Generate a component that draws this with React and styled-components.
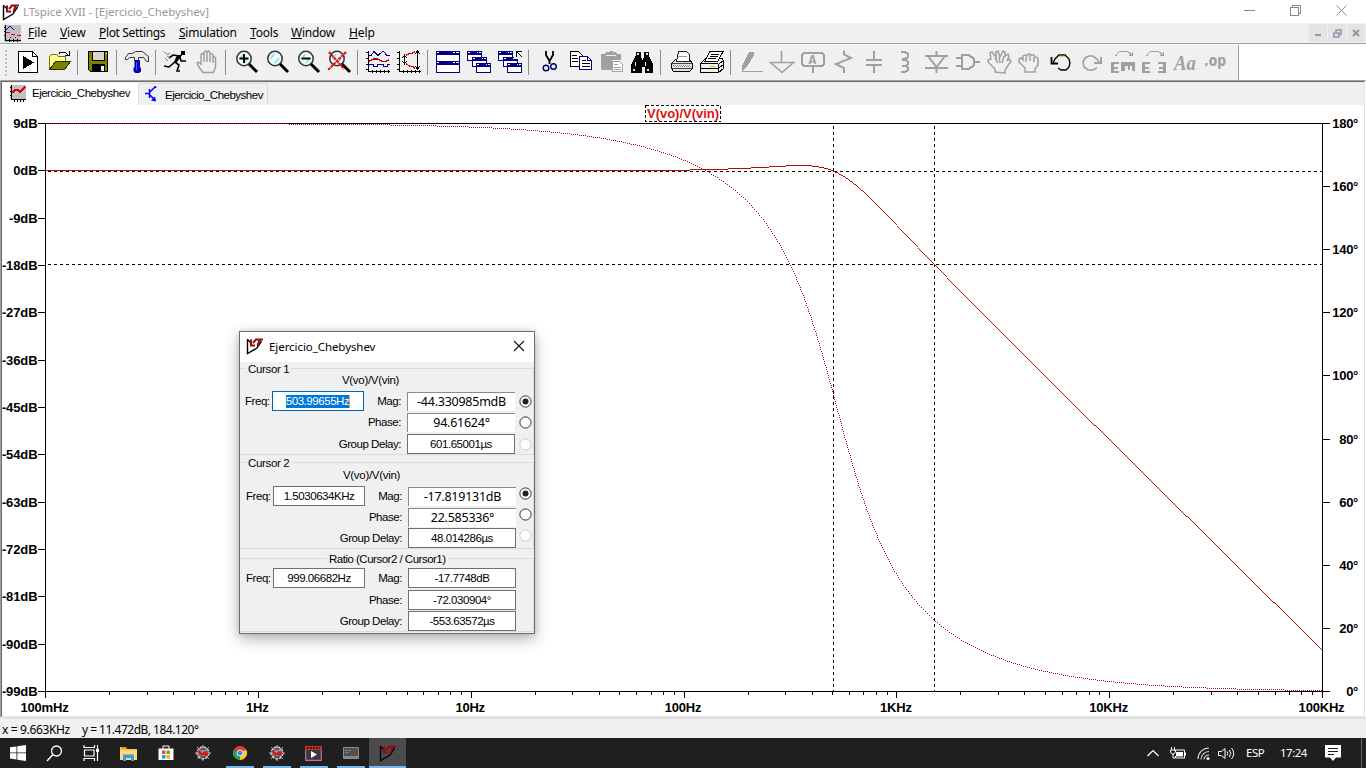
import React from "react";
import styled, { createGlobalStyle, css } from "styled-components";

const GlobalStyle = createGlobalStyle`
  * { box-sizing: border-box; }
  html, body { margin: 0; padding: 0; overflow: hidden; background: #fff; }
  body { font-family: "Noto Sans", "Open Sans", sans-serif; font-size: 11.5px; color: #000; }
  svg { display: block; flex: none; }
`;

const GRAY = "#a0a0a0";

const Window = styled.div`
  width: 1366px;
  height: 768px;
  display: flex;
  flex-direction: column;
  background: #fff;
  position: relative;
`;

/* ---------- title bar ---------- */
const TitleBar = styled.header`
  height: 23px;
  display: flex;
  align-items: center;
  padding: 0 2px;
  background: #fff;
`;
const TitleText = styled.span`
  flex: 1;
  margin-left: 3px;
  color: #999;
  letter-spacing: -0.07px;
  line-height: 22px;
  white-space: pre;
`;
const WindowButton = styled.span`
  width: 46px;
  height: 23px;
  display: flex;
  align-items: flex-start;
  justify-content: center;
  padding-top: 5px;
`;

/* ---------- menu bar ---------- */
const MenuBar = styled.nav`
  height: 20px;
  display: flex;
  align-items: center;
  padding-left: 4px;
  background: #f0f0f0;
`;
const MenuItem = styled.span`
  width: ${(p) => p.$w}px;
  margin-right: 14px;
  font-size: 12px;
  letter-spacing: ${(p) => p.$ls || 0}px;
  line-height: 20px;
  white-space: nowrap;
`;
const MenuIcon = styled.span`
  margin-right: 7px;
`;
const MdiButton = styled.span`
  width: 18px;
  height: 18px;
  margin-right: 1px;
  background: #e4e4e4;
  display: flex;
  align-items: center;
  justify-content: center;
`;
const Spacer = styled.span`
  flex: 1;
`;

/* ---------- tool bar ---------- */
const ToolRow = styled.div`
  height: 37px;
  border-top: 1px solid ${GRAY};
  background: #fff;
  display: flex;
`;
const ToolBar = styled.div`
  width: 1239px;
  margin-top: 1px;
  background: #f0f0f0;
  border-right: 1px solid ${GRAY};
  display: flex;
  align-items: flex-start;
  padding-top: 5px;
`;
const Grip = styled.span`
  width: 2px;
  height: 27px;
  margin: 0 5px 0 5px;
  background: repeating-linear-gradient(#bdbdbd 0 2px, #f0f0f0 2px 4px);
`;
const Divider = styled.span`
  width: 8px;
  height: 25px;
  border-left: 3px solid #f0f0f0;
  &::after {
    content: "";
    display: block;
    width: 1px;
    height: 25px;
    background: #8c8c8c;
  }
`;

/* ---------- tabs ---------- */
const Workspace = styled.main`
  height: 637px;
  display: flex;
  flex-direction: column;
  border-top: 1px solid ${GRAY};
  border-left: 1px solid ${GRAY};
  border-right: 1px solid #fff;
`;
const WorkspaceInner = styled.div`
  flex: 1;
  display: flex;
  flex-direction: column;
  border-top: 1px solid #696969;
  border-left: 1px solid #696969;
  border-right: 1px solid #e3e3e3;
  border-bottom: 1px solid #e3e3e3;
`;
const TabStrip = styled.div`
  height: 23px;
  display: flex;
  align-items: flex-end;
  background: #f0f0f0;
`;
const Tab = styled.div`
  display: flex;
  align-items: center;
  width: ${(p) => p.$w}px;
  height: ${(p) => (p.$active ? 22 : 21)}px;
  margin-bottom: ${(p) => (p.$active ? 0 : 1)}px;
  padding-left: ${(p) => (p.$active ? 8 : 6)}px;
  padding-bottom: ${(p) => (p.$active ? 3 : 0)}px;
  background: ${(p) => (p.$active ? "#fff" : "#f0f0f0")};
  border-right: 1px solid #d9d9d9;
  border-top: 1px solid ${(p) => (p.$active ? "#fff" : "#d9d9d9")};
  font: 11.5px "Liberation Sans", sans-serif;
  letter-spacing: -0.5px;
`;
const TabText = styled.span`
  margin-left: ${(p) => p.$ml || 6}px;
  padding-top: ${(p) => p.$pt || 0}px;
`;

/* ---------- status and task bars ---------- */
const StatusBar = styled.footer`
  height: 21px;
  border-top: 2px solid #e3e3e3;
  background: #f0f0f0;
  display: flex;
  align-items: center;
  gap: 12px;
  padding-left: 2px;
  padding-top: 2px;
  font-size: 12px;
  white-space: pre;
`;
const StatusItem = styled.span`
  letter-spacing: ${(p) => p.$ls}px;
`;
const TaskBar = styled.div`
  height: 30px;
  background: #1f1f1f;
  display: flex;
  color: #fff;
`;
const TaskCell = styled.span`
  width: ${(p) => p.$w || 37}px;
  height: 30px;
  display: flex;
  align-items: center;
  justify-content: center;
  position: relative;
  background: ${(p) => (p.$active ? "#4b4b4b" : "transparent")};
  ${(p) =>
    p.$open &&
    css`
      &::after {
        content: "";
        position: absolute;
        bottom: 0;
        left: ${p.$active ? 0 : 5}px;
        right: ${p.$active ? 0 : 4}px;
        height: 2px;
        background: #76b9ed;
      }
    `}
`;
const TrayText = styled.span`
  width: ${(p) => p.$w}px;
  font-size: 11.5px;
  line-height: 30px;
  letter-spacing: -0.5px;
`;
const TrayIcon = styled.span`
  width: ${(p) => p.$w}px;
  display: flex;
  align-items: center;
`;
const PeekEdge = styled.span`
  width: 5px;
  border-left: 1px solid #666;
`;

/* ---------- cursor dialog ---------- */
const Dialog = styled.section`
  position: absolute;
  left: 239px;
  top: 331px;
  width: 296px;
  height: 303px;
  border: 1px solid #6e6e6e;
  background: #f0f0f0;
  box-shadow: 0 5px 14px rgba(0, 0, 0, 0.3), 0 0 5px rgba(0, 0, 0, 0.12);
  font: 11.5px "Liberation Sans", sans-serif;
  letter-spacing: -0.45px;
`;
const DialogTitle = styled.div`
  height: 30px;
  background: #fff;
  display: flex;
  align-items: center;
  padding: 0 9px 2px 6px;
  font-family: "Noto Sans", sans-serif;
  letter-spacing: -0.07px;
  span { flex: 1; margin-left: 5px; }
`;
const Group = styled.div`
  position: relative;
  height: ${(p) => p.$h}px;
  margin-top: ${(p) => p.$mt}px;
  padding-top: ${(p) => p.$pt}px;
  padding-left: ${(p) => p.$indent}px;
  border: 1px solid #dcdcdc;
  border-left-width: 0;
`;
const Legend = styled.span`
  position: absolute;
  top: -7px;
  left: ${(p) => p.$left}px;
  padding: 0 2px;
  background: #f0f0f0;
  line-height: 15px;
  white-space: pre;
  letter-spacing: ${(p) => p.$ls || -0.35}px;
`;
const TraceName = styled.div`
  height: 17px;
  width: 251px;
  text-align: center;
  line-height: 13px;
  letter-spacing: -0.3px;
`;
const Row = styled.div`
  display: flex;
  align-items: center;
  height: 20px;
  margin-bottom: ${(p) => p.$gap}px;
`;
const FreqLabel = styled.span`
  width: 27px;
`;
const Label = styled.span`
  flex: 1;
  text-align: right;
  padding-right: 6px;
  letter-spacing: -0.45px;
`;
const Field = styled.span`
  width: ${(p) => p.$w}px;
  height: 20px;
  background: #fff;
  border: 1px solid ${(p) => (p.$focus ? "#0067b8" : "#6f6f6f")};
  display: flex;
  align-items: center;
  justify-content: center;
`;
const Readout = styled.span`
  width: 108px;
  height: 19px;
  background: #fff;
  border-top: 1px solid #8a8a8a;
  border-left: 1px solid #8a8a8a;
  display: flex;
  align-items: center;
  justify-content: center;
  font: 12.5px "Noto Sans", sans-serif;
  letter-spacing: -0.25px;
`;
const Selected = styled.span`
  background: #0078d7;
  color: #fff;
  line-height: 13px;
  border-right: 1px solid #f0a050;
`;
const RadioSlot = styled.span`
  width: ${(p) => p.$w}px;
  padding-left: ${(p) => p.$pl}px;
  padding-top: ${(p) => p.$pt}px;
  height: 20px;
`;

/* ---------- glyphs ---------- */
const Logo = ({ size = 18 }) => (
  <svg width={size} height={size} viewBox="0 0 18 18">
    <path d="M1.500 2V16.500L11 11L15.500 4" fill="none" stroke="#000" strokeWidth="1.400" />
    <path d="M1.500 2.500L5 6" stroke="#000" strokeWidth="1.200" />
    <path d="M5 2.500v6h4M7 6l3-3.500h7M13.500 2.500L11.500 9" fill="none" stroke="#8c0c10" strokeWidth="2" />
  </svg>
);

const MiniPlot = () => (
  <svg width="17" height="17" viewBox="0 0 17 17" shapeRendering="crispEdges">
    <path d="M0 0h17v17H0z" fill="#c0c0c0" />
    <path d="M1.500 0v15.500H17M0 2.500h2M0 6.500h2M0 10.500h2M5.500 14v3M9.500 14v3M13.500 14v3" stroke="#000" fill="none" />
    <path d="M2 5l4-4 4 4" stroke="#0000c0" fill="none" />
    <path d="M2 7.500h4M7 9.500h4M13 10.500h4" stroke="#e00000" />
    <path d="M6 12.500h1M11 12.500h1" stroke="#0000c0" />
  </svg>
);

const PlotTabIcon = () => (
  <svg width="16" height="17" viewBox="0 0 16 17" shapeRendering="crispEdges">
    <path d="M0 0h16v14H0z" fill="#c0c0c0" />
    <path d="M1.500 0v14.500H16M0 2.500h2M0 6.500h2M0 10.500h2M4.500 14v3M7.500 14v3M10.500 14v3M13.500 14v3" stroke="#000" fill="none" />
    <path d="M2 8l3-3h3l2 2 5-5" stroke="#e00000" strokeWidth="1.500" fill="none" />
  </svg>
);

const TransistorIcon = () => (
  <svg width="13" height="16" viewBox="0 0 13 16">
    <path d="M0 7.500h4.500M4.500 3v9M5 6l5-5M5 9l5 5M10.500 0v2" stroke="#0000ff" fill="none" strokeWidth="1.500" />
    <path d="M11 15.500l-5-1 4-4z" fill="#0000ff" />
  </svg>
);

const Lens = ({ children }) => (
  <>
    <circle cx="14" cy="8.500" r="7.200" fill="#f4fbfb" stroke="#333" strokeWidth="1.500" />
    <path d="M9.500 9l4-5M14 13l4-5" stroke="#70e8e8" strokeWidth="1.500" />
    <path d="M19 14l8 8" stroke="#000" strokeWidth="3" />
    {children}
  </>
);

const MiniWin = ({ x, y }) => (
  <g transform={`translate(${x} ${y})`}>
    <path d="M.5 .5h14v9H.5z" fill="#fff" stroke="#000080" />
    <path d="M0 0h15v4H0z" fill="#000080" />
    <path d="M1 1.500h2M10 1.500h1M12 1.500h2" stroke="#fff" />
  </g>
);

const FrameArc = () => <path d="M8.500 6l4-4.500h8l5 4M25.500 1.500v4h-4" stroke={GRAY} fill="none" />;

const ICONS = {
  run: (
    <>
      <path d="M6.500 1.500h14l5 5v16h-19z" fill="#fff" stroke="#000" />
      <path d="M20.500 1.500v5h5" fill="none" stroke="#000" />
      <path d="M11 6v13l11-6.500z" />
    </>
  ),
  open: (
    <>
      <path d="M6.500 19.500V6.500l2-2h5l2 2h7v5" fill="#ffff90" stroke="#707000" />
      <path d="M6.500 19.500l6-8h15l-6 8z" fill="#808000" stroke="#303000" />
      <path d="M16 3.500l2-1.500h4l3 3M26.500 1v4.500H22" fill="none" stroke="#000" />
    </>
  ),
  save: (
    <>
      <path d="M6.500 1.500h19v20h-17l-2-2z" fill="#808000" stroke="#000" />
      <path d="M10.500 1.500h12v9h-12z" fill="#d8d8d0" stroke="#000" />
      <path d="M10 14h13v8H10z" />
      <path d="M19 16h3v5h-3z" fill="#f0f0f0" />
      <path d="M23.500 3h1" stroke="#fff" />
    </>
  ),
  hammer: (
    <>
      <path d="M4.500 7.500l3-4h4l3-2h7l6 5v5h-2l-3-4h-5v3h-4v-3h-5l-2 2h-2z" fill="#e8e8e8" stroke="#333" />
      <path d="M14 10.500h4.500v6l1 2v3l-1.500 1h-3.500l-1.500-1v-3l1-2z" fill="#0000e0" stroke="#000070" />
      <path d="M15.500 12v8" stroke="#5050ff" />
    </>
  ),
  runner: (
    <>
      <path d="M21 1h4v4h-4z" />
      <path d="M21 5l-6 7 4 3-2 6h3M16 11L9 17l-5-1M20 6l-7-1-4 3M20 7l1 4h5" fill="none" stroke="#000" strokeWidth="1.600" />
      <path d="M17 5h5l-5 7h-3z" />
      <path d="M4 1.500l3 3 3-1M7 6l3 2M5 8l3 3" fill="none" stroke="#777" />
    </>
  ),
  hand: (
    <path d="M12 22.500l-3-4-3-5 1-1.500 3 2V4.500l1-1 2 1V2.500l1.500-1.500 1.500 1.500V2l1.500-1L19 3v1l1.500-.5L22 5v2l1-.5 1.500 1.500v9l-2 5.500zM13 5v7M16 3v9M19 4v8M22 7v6" fill="#f0f0f0" stroke={GRAY} strokeWidth="1.500" />
  ),
  zoomIn: <Lens><path d="M9.500 8.500h9M14 4v9" stroke="#000" strokeWidth="2" /></Lens>,
  zoom: <Lens />,
  zoomOut: <Lens><path d="M9.500 8.500h9" stroke="#000" strokeWidth="2" /></Lens>,
  zoomFit: (
    <Lens>
      <path d="M6 2l15 17M23 2L5 20" stroke="#e01818" strokeWidth="2.200" strokeDasharray="3 .7" />
    </Lens>
  ),
  plot: (
    <>
      <path d="M6.500 1v20.500H28M4 2.500h3M4 8.500h3M4 14.500h3M4 19.500h3M10.500 20v3M14.500 20v3M18.500 20v3M22.500 20v3M26.500 20v3" stroke="#000" fill="none" />
      <path d="M7 5.500h2l3-4 4 4 5-4.500 4 4.500h3" stroke="#0000a0" fill="none" />
      <path d="M7 11.500l4-2.500h5l4 2.500h4l3-2" stroke="#c00000" fill="none" strokeWidth="1.300" />
      <path d="M7 14.500h4v2h4v-2h6v2h4v-2h3" stroke="#0000a0" fill="none" />
    </>
  ),
  autorange: (
    <>
      <path d="M6.500 1v20.500H28M4 2.500h3M4 8.500h3M4 14.500h3M4 19.500h3M10.500 20v3M14.500 20v3M18.500 20v3M22.500 20v3M26.500 20v3M11.500 5v9M9.500 8l2-3 2 3M9.500 11l2 3 2-3M24.500 1v18M22 4l2.500-3L27 4M22 16l2.500 3 2.500-3" stroke="#000" fill="none" />
      <path d="M13 5.500l3-2h3l3-2M13 13.500l4 3h3l2 2" stroke="#e00000" strokeWidth="1.400" fill="none" />
    </>
  ),
  tile: (
    <>
      <path d="M4.500 1.500h23v21h-23z" fill="#fff" stroke="#000080" />
      <path d="M4 1h24v4H4zM4 11h24v4H4z" fill="#000080" />
      <path d="M5 2.500h2M21 2.500h2M24 2.500h3M5 12.500h2M21 12.500h2M24 12.500h3" stroke="#fff" />
    </>
  ),
  cascade: (
    <>
      <MiniWin x={4} y={1} />
      <MiniWin x={9} y={7} />
      <MiniWin x={13} y={13} />
    </>
  ),
  closeAll: (
    <>
      <MiniWin x={4} y={1} />
      <MiniWin x={9} y={7} />
      <MiniWin x={13} y={13} />
      <path d="M20 0h9v9h-9z" fill="#f0f0f0" />
      <path d="M22.500 7V1.500H28M23 2l5 5" stroke="#000" fill="none" strokeWidth="1.200" />
    </>
  ),
  cut: (
    <>
      <path d="M13 1v4l3.500 6M20 1v4l-3.500 6v3" stroke="#000" fill="none" strokeWidth="1.800" />
      <circle cx="13" cy="18" r="2.800" fill="none" stroke="#00006c" strokeWidth="1.400" />
      <circle cx="20.500" cy="16.500" r="2.800" fill="none" stroke="#00006c" strokeWidth="1.400" />
    </>
  ),
  copy: (
    <>
      <path d="M6.500 1.500h8l4 4v11h-12z" fill="#fff" stroke="#000" />
      <path d="M8 5.500h5M8 8.500h6M8 11.500h6" stroke="#000" />
      <path d="M15.500 6.500h8l4 4v9h-12z" fill="#fff" stroke="#000080" />
      <path d="M23.500 6.500v4h4" fill="none" stroke="#000080" />
      <path d="M18 10.500h4M18 13.500h8M18 16.500h8" stroke="#000" />
    </>
  ),
  paste: (
    <>
      <path d="M6 4h4l1-2h3l1-1h2l1 1h3l1 2h4v6h-9v10H7l-1-1z" fill={GRAY} />
      <path d="M11 5.500h10" stroke="#f0f0f0" />
      <path d="M17.500 11.500h7l3 3v7h-10zM19 14.500h4M19 17.500h7M19 19.500h7" fill="#fff" stroke={GRAY} />
    </>
  ),
  find: (
    <>
      <path d="M10 2h5v5l1 3h1l1-3V2h5v4l4 9v8h-8v-6h-3v6H5v-8l5-9z" transform="translate(0 -.5)" />
      <path d="M11 4h2M20 4h2M9.500 12v4M19.500 12v4M8 19v2M22 19v2" stroke="#e8e8e8" strokeWidth="1.300" />
    </>
  ),
  print: (
    <>
      <path d="M10.500 9.500l-4 4v5l2 3h16l3-3v-5l-3-4z" fill="#e4e4e4" stroke="#000" />
      <path d="M11.500 11l2-9.500h8l3 3V11z" fill="#fff" stroke="#222" />
      <path d="M13 6.500h9" stroke="#999" />
      <path d="M7 13.500h20M7 18.500h20" stroke="#444" />
      <path d="M8 15.500h18M9 16.500h17" stroke="#999" strokeDasharray="1 1" />
    </>
  ),
  printSetup: (
    <>
      <path d="M4.500 13.500l5-5h17l1 3v7l-5 4h-18z" fill="#f0f0f0" stroke="#000" />
      <path d="M9 11l5-9.500h13l-5 9.500z" fill="#fff" stroke="#000" />
      <path d="M15 4.500h8M14 6.500h8M12 8.500h8" stroke="#000" />
      <path d="M4 13.500h18M4 18.500h18M22.500 14v8M23 14l5-4M23 18l5-4" stroke="#000" />
      <path d="M14 16.500h5" stroke="#c8c800" strokeWidth="1.500" />
    </>
  ),
  wire: (
    <>
      <path d="M7 16l7-14h5v3l-7 12-5 4z" fill={GRAY} />
      <path d="M7.500 16v5h20" stroke={GRAY} fill="none" />
    </>
  ),
  ground: <path d="M15.500 1v11M4.500 12.500h23l-11.500 10z" fill="none" stroke={GRAY} strokeWidth="1.600" />,
  netLabel: (
    <>
      <path d="M7 3h18l2 2v9l-2 2H7l-2-2V5zM15.500 16v7" fill="none" stroke={GRAY} strokeWidth="2" />
      <text x="11.500" y="13.500" fontSize="13" fontWeight="700" fontFamily="Liberation Mono, monospace" fill={GRAY}>A</text>
    </>
  ),
  resistor: <path d="M16 .5v4l7 3.500-15 6 8 4v5" fill="none" stroke={GRAY} strokeWidth="2" />,
  capacitor: <path d="M14 1h2v8h7v2H7V9h7zM7 14h16v2h-7v7h-2v-7H7z" fill={GRAY} />,
  inductor: <path d="M11 2h4l3 2v3l-3 2h-3M12 10h4l2 2v2l-2 2h-4M12 16h4l2 2v2l-3 2h-4" fill="none" stroke={GRAY} strokeWidth="2" />,
  diode: <path d="M15.500 1v4M4 6h23M7 6l8.500 11L24 6M4 18h23M15.500 18v5" fill="none" stroke={GRAY} strokeWidth="2" />,
  gate: <path d="M4 8h6M4 16h6M10 5h7l5 4v6l-5 4h-7zM22 12h6" fill="none" stroke={GRAY} strokeWidth="2.200" />,
  move: (
    <path d="M12 22v-3l-7-7v-2l3-1-1-6 2-1 4 5V2l2-1 2 6 3-6 2 1v4l3-2 1 2-2 5 2-2 2 2-6 9v3z M12 8l3 5M16 7l1 6M21 6l-2 7" fill="#f0f0f0" stroke={GRAY} strokeWidth="1.500" />
  ),
  drag: (
    <path d="M11 22v-4l-6-6V9l2-1 2 2V6l2-1 2 1 1-2h2l1 1h3l1 2 3 1v7l-3 4v3z M12 7v5M16 5v6M20 7v5" fill="#f0f0f0" stroke={GRAY} strokeWidth="1.500" />
  ),
  undo: (
    <>
      <path d="M8 13l2-4 4-4h6l4 4 1 4-1 4-3 3h-5l-3-2" fill="none" stroke="#000" strokeWidth="1.400" />
      <path d="M14 6h6l3 3" fill="none" stroke="#a0a020" strokeWidth=".8" />
      <path d="M6.500 7v6.500H13" fill="none" stroke="#000" strokeWidth="1.800" />
    </>
  ),
  redo: (
    <>
      <path d="M23 12l-2-3-4-3h-4L9 8l-2 4 1 5 4 3h5l4-2" fill="none" stroke={GRAY} strokeWidth="1.700" />
      <path d="M25 7v6h-7" fill="none" stroke={GRAY} strokeWidth="2" />
    </>
  ),
  rotate: (
    <>
      <FrameArc />
      <path d="M4 12h8v2H7v3h4v2H7v2h5v2H4zM14 12h14v9h-3v-5h-2v4h-2v-4h-3v5h-4z" fill={GRAY} />
    </>
  ),
  mirror: (
    <>
      <FrameArc />
      <path d="M4 12h8v2H7v3h4v2H7v2h5v2H4zM20 12h8v11h-8v-2h5v-2h-4v-2h4v-3h-5z" fill={GRAY} />
    </>
  ),
  text: (
    <text x="5" y="20" fontSize="20" fontWeight="700" fontStyle="italic" fontFamily="Liberation Serif, serif" fill={GRAY} textLength="22" lengthAdjust="spacingAndGlyphs">Aa</text>
  ),
  directive: (
    <text x="4" y="16" fontSize="15" fontWeight="700" fontFamily="DejaVu Sans, sans-serif" fill={GRAY} textLength="22" lengthAdjust="spacingAndGlyphs">.op</text>
  ),
};

const ToolIcon = ({ name, smooth }) => (
  <svg width="31" height="26" viewBox="0 0 31 26" shapeRendering={smooth ? "auto" : "crispEdges"}>
    {ICONS[name]}
  </svg>
);

const TOOL_GROUPS = [
  ["run", "open"],
  ["save"],
  ["hammer"],
  ["runner", "hand"],
  ["zoomIn", "zoom", "zoomOut", "zoomFit"],
  ["plot", "autorange"],
  ["tile", "cascade", "closeAll"],
  ["cut", "copy", "paste", "find"],
  ["print", "printSetup"],
  ["wire", "ground", "netLabel", "resistor", "capacitor", "inductor", "diode", "gate", "move", "drag", "undo", "redo", "rotate", "mirror", "text", "directive"],
];
const SMOOTH = new Set(["runner", "hand", "zoomIn", "zoom", "zoomOut", "zoomFit", "move", "drag", "hammer", "cut", "resistor", "undo", "redo", "diode", "ground"]);

const MENUS = [
  ["File", 18, -0.1], ["View", 25, -0.2], ["Plot Settings", 66, -0.35], ["Simulation", 57, -0.25],
  ["Tools", 27, -0.2], ["Window", 44, -0.25], ["Help", 25, -0.1],
];

/* ---------- Bode plot ---------- */
const X0 = 45, X1 = 1322, Y0 = 123, Y1 = 691;
const DECADE = (X1 - X0) / 6;
const F0 = 525, Q = 0.9565;

const freqAt = (x) => 0.1 * Math.pow(10, (x - X0) / DECADE);
const magY = (x) => {
  const r = freqAt(x) / F0;
  const db = -10 * Math.log10(Math.pow(1 - r * r, 2) + Math.pow(r / Q, 2));
  return Y0 + ((9 - db) / 108) * (Y1 - Y0);
};
const phaseY = (x) => {
  const r = freqAt(x) / F0;
  const deg = 180 - (Math.atan2(r / Q, 1 - r * r) * 180) / Math.PI;
  return Y0 + ((180 - deg) / 180) * (Y1 - Y0);
};

const magnitudePath = () => {
  let d = "";
  let start = X0;
  for (let x = X0; x < X1; x++) {
    const y = Math.round(magY(x));
    if (x + 1 === X1 || Math.round(magY(x + 1)) !== y) {
      d += `M${start} ${y}H${x + 1}V${y + 1}H${start}Z`;
      start = x + 1;
    }
  }
  return d;
};
const phasePath = () => {
  let d = "";
  let n = 0;
  for (let x = X0; x < X1; x++) {
    const a = Math.round(phaseY(x));
    const b = Math.max(a + 1, Math.round(phaseY(x + 1)));
    for (let y = a; y < b; y++) if (n++ % 2 === 0) d += `M${x} ${y}h1v1h-1z`;
  }
  return d;
};

const minorTicks = () => {
  let d = "";
  for (let k = 0; k < 6; k++)
    for (let m = 2; m < 10; m++)
      d += `M${Math.round(X0 + DECADE * (k + Math.log10(m)))}.5 691v4`;
  return d;
};

const DB_LABELS = [9, 0, -9, -18, -27, -36, -45, -54, -63, -72, -81, -90, -99];
const DEG_LABELS = [180, 160, 140, 120, 100, 80, 60, 40, 20, 0];
const HZ_LABELS = ["100mHz", "1Hz", "10Hz", "100Hz", "1KHz", "10KHz", "100KHz"];

const PlotText = styled.text`
  font: bold 13px "Liberation Sans", sans-serif;
  letter-spacing: ${(p) => p.$ls || 0}px;
  fill: ${(p) => p.$fill || "#000"};
`;

const BodePlot = () => (
  <svg width="1362" height="611" viewBox="2 105 1362 611">
    <g shapeRendering="crispEdges" fill="none" stroke="#000">
      <path d="M38 123.500H1330M38 691.500H1330M45.500 123v575M1322.500 123v575" />
      <path d={DB_LABELS.map((_, i) => `M38 ${Math.round(Y0 + (i * 568) / 12)}.5h7`).join("")} />
      <path d={DEG_LABELS.map((_, i) => `M1322 ${Math.round(Y0 + (i * 568) / 9)}.5h8`).join("")} />
      <path d={HZ_LABELS.map((_, i) => `M${Math.round(X0 + DECADE * i)}.5 691v7`).join("")} />
      <path d={minorTicks()} />
      <path d="M48 171.500H1322M48 264.500H1322M833.500 126V691M934.500 126V691" strokeDasharray="3 3" />
      <path d="M645.500 105.500h75v16h-75z" strokeDasharray="3 2" />
    </g>
    <path d={phasePath()} fill="#b80c0c" />
    <path d={magnitudePath()} fill="#b80c0c" />
    <PlotText x="647" y="118" textLength="72" $fill="#e01010">V(vo)/V(vin)</PlotText>
    {DB_LABELS.map((v, i) => (
      <PlotText key={v} x="37.500" y={Math.round(Y0 + (i * 568) / 12) + 5} textAnchor="end" $ls={-0.1}>{`${v}dB`}</PlotText>
    ))}
    {DEG_LABELS.map((v, i) => (
      <PlotText key={v} x="1358" y={Math.round(Y0 + (i * 568) / 9) + 5} textAnchor="end" $ls={-0.3}>{`${v}°`}</PlotText>
    ))}
    {HZ_LABELS.map((v, i) => (
      <PlotText key={v} x={X0 + DECADE * i - 0.5} y="712" textAnchor="middle" $ls={-0.2}>{v}</PlotText>
    ))}
  </svg>
);

/* ---------- dialog ---------- */
const Radio = ({ state }) => (
  <svg width="13" height="13" viewBox="0 0 13 13">
    <circle cx="6.500" cy="6.500" r="5.600" fill="#fff" stroke={state === "disabled" ? "#ccc" : "#333"} />
    {state === "on" && <circle cx="6.500" cy="6.500" r="3" fill="#222" />}
  </svg>
);

const CursorGroup = ({ legend, freq, mag, phase, delay, focus, shift, mt, radioTop }) => {
  const slot = { $w: 18 - shift, $pl: 4 - shift, $pt: radioTop };
  return (
    <Group $h={87} $mt={mt} $pt={focus ? 5 : 6} $indent={5 + shift}>
      <Legend $left={6}>{legend}</Legend>
      <TraceName>V(vo)/V(vin)</TraceName>
      <Row $gap={1}>
        <FreqLabel>Freq:</FreqLabel>
        <Field $w={92} $focus={focus}>{focus ? <Selected>{freq}</Selected> : freq}</Field>
        <Label>Mag:</Label>
        <Readout>{mag}</Readout>
        <RadioSlot {...slot}><Radio state="on" /></RadioSlot>
      </Row>
      <Row $gap={focus ? 2 : 1}>
        <Label>Phase:</Label>
        <Readout>{phase}</Readout>
        <RadioSlot {...slot}><Radio /></RadioSlot>
      </Row>
      <Row>
        <Label>Group Delay:</Label>
        <Field $w={108}>{delay}</Field>
        <RadioSlot {...slot}><Radio state="disabled" /></RadioSlot>
      </Row>
    </Group>
  );
};

const CursorDialog = () => (
  <Dialog>
    <DialogTitle>
      <Logo size={18} />
      <span>Ejercicio_Chebyshev</span>
      <svg width="12" height="12" viewBox="0 0 12 12"><path d="M1 1l10 10M11 1L1 11" stroke="#111" strokeWidth="1.100" /></svg>
    </DialogTitle>
    <CursorGroup legend="Cursor 1" freq="503.99655Hz" mag="-44.330985mdB" phase="94.61624°" delay="601.65001µs" focus shift={0} mt={6} radioTop={4} />
    <CursorGroup legend="Cursor 2" freq="1.5030634KHz" mag="-17.819131dB" phase="22.585336°" delay="48.014286µs" shift={1} mt={7} radioTop={1} />
    <Group $h={74} $mt={9} $pt={9} $indent={6}>
      <Legend $left={87} $ls={-0.5}>Ratio (Cursor2 / Cursor1)</Legend>
      <Row $gap={2}>
        <FreqLabel>Freq:</FreqLabel>
        <Field $w={92}>999.06682Hz</Field>
        <Label>Mag:</Label>
        <Field $w={108}>-17.7748dB</Field>
        <RadioSlot $w={17} />
      </Row>
      <Row $gap={1}>
        <Label>Phase:</Label>
        <Field $w={108}>-72.030904°</Field>
        <RadioSlot $w={17} />
      </Row>
      <Row>
        <Label>Group Delay:</Label>
        <Field $w={108}>-553.63572µs</Field>
        <RadioSlot $w={17} />
      </Row>
    </Group>
  </Dialog>
);

/* ---------- task bar glyphs ---------- */
const Spider = () => (
  <svg width="18" height="18" viewBox="0 0 18 18">
    <circle cx="9" cy="9" r="6" fill="#777" stroke="#c8c8c8" strokeWidth="1.300" strokeDasharray="3 1" />
    <path d="M9 1v16M1 9h16M3 3l12 12M15 3L3 15" stroke="#bbb" strokeWidth=".9" />
    <path d="M3 7l3-1 2 3 3-2 4 2-3 3-3-1-2 1z" fill="#c81e1e" />
    <path d="M7 5h4M7 13h4" stroke="#222" strokeWidth="1.200" />
  </svg>
);

const App = () => (
  <>
    <GlobalStyle />
    <Window>
      <TitleBar>
        <Logo size={18} />
        <TitleText>LTspice XVII - [Ejercicio_Chebyshev]</TitleText>
        <WindowButton><svg width="11" height="11" shapeRendering="crispEdges"><path d="M0 5.500h11" stroke="#888" /></svg></WindowButton>
        <WindowButton><svg width="11" height="11" shapeRendering="crispEdges"><path d="M.5 2.500h8v8h-8zM2.500 2V.5h8v8H9" fill="none" stroke="#888" /></svg></WindowButton>
        <WindowButton><svg width="11" height="11"><path d="M.5 .5l10 10M10.500 .5l-10 10" stroke="#888" /></svg></WindowButton>
      </TitleBar>

      <MenuBar>
        <MenuIcon><MiniPlot /></MenuIcon>
        {MENUS.map(([label, w, ls]) => (
          <MenuItem key={label} $w={w} $ls={ls}><u>{label[0]}</u>{label.slice(1)}</MenuItem>
        ))}
        <Spacer />
        <MdiButton><svg width="8" height="8"><path d="M1 6h6" stroke="#8898a8" strokeWidth="2" /></svg></MdiButton>
        <MdiButton><svg width="9" height="9"><path d="M.8 4h5v4h-5zM3 3V1h5v4.500H6.500" fill="none" stroke="#8898a8" strokeWidth="1.500" /></svg></MdiButton>
        <MdiButton><svg width="8" height="8"><path d="M1 1l6 6M7 1L1 7" stroke="#8898a8" strokeWidth="2" /></svg></MdiButton>
      </MenuBar>

      <ToolRow>
        <ToolBar>
          <Grip />
          {TOOL_GROUPS.map((group, i) => (
            <React.Fragment key={group[0]}>
              {i > 0 && <Divider />}
              {group.map((name) => <ToolIcon key={name} name={name} smooth={SMOOTH.has(name)} />)}
            </React.Fragment>
          ))}
        </ToolBar>
      </ToolRow>

      <Workspace>
        <WorkspaceInner>
          <TabStrip>
            <Tab $w={137} $active><PlotTabIcon /><TabText>Ejercicio_Chebyshev</TabText></Tab>
            <Tab $w={129}><TransistorIcon /><TabText $ml={7} $pt={2}>Ejercicio_Chebyshev</TabText></Tab>
          </TabStrip>
          <BodePlot />
        </WorkspaceInner>
      </Workspace>

      <StatusBar>
        <StatusItem $ls={-0.35}>x = 9.663KHz</StatusItem>
        <StatusItem $ls={-0.5}>y = 11.472dB, 184.120°</StatusItem>
      </StatusBar>

      <TaskBar>
        <TaskCell $w={36}>
          <svg width="16" height="16" viewBox="0 0 16 16"><path d="M0 2.300l6.500-.9v6.100H0zM7.300 1.300L16 0v7.500H7.300zM0 8.300h6.500v6.100L0 13.500zM7.300 8.300H16V16l-8.700-1.300z" fill="#fff" /></svg>
        </TaskCell>
        <TaskCell $w={36}>
          <svg width="17" height="17" viewBox="0 0 17 17"><circle cx="10.500" cy="6" r="5" fill="none" stroke="#fff" strokeWidth="1.300" /><path d="M7 9.500L1 16" stroke="#fff" strokeWidth="1.400" /></svg>
        </TaskCell>
        <TaskCell $w={38}>
          <svg width="17" height="16" viewBox="0 0 17 16"><path d="M1 0v2.500h10.500V0M1.500 5h9.500v6H1.500zM1 16v-2.500h10.500V16M14.500 0v16" fill="none" stroke="#fff" strokeWidth="1.200" /><path d="M13 4h3v3h-3z" fill="#fff" /></svg>
        </TaskCell>
        <TaskCell>
          <svg width="17" height="15" viewBox="0 0 17 15"><path d="M0 1h6l1 2h10v11H0z" fill="#f8c850" /><path d="M1 1h5v2H1z" fill="#e09a20" /><path d="M0 4.500h17V14H0z" fill="#ffdc78" /><path d="M3 15V8.500h11V15h-3v-3H6v3z" fill="#3e9bdc" /></svg>
        </TaskCell>
        <TaskCell>
          <svg width="16" height="16" viewBox="0 0 16 16"><path d="M5 4V1h6v3" fill="none" stroke="#fff" /><path d="M.5 3.500h15V15h-15z" fill="#fff" /><path d="M4 5.500h3.500V9H4z" fill="#f05020" /><path d="M8.500 5.500H12V9H8.500z" fill="#70b010" /><path d="M4 10h3.500v3.500H4z" fill="#10a0e8" /><path d="M8.500 10H12v3.500H8.500z" fill="#f8b000" /></svg>
        </TaskCell>
        <TaskCell><Spider /></TaskCell>
        <TaskCell $open>
          <svg width="14" height="14" viewBox="0 0 14 14">
            <path d="M7 7L.9 3.500A7 7 0 0 1 13.100 3.500z" fill="#e04030" />
            <path d="M7 7L.9 3.500A7 7 0 0 0 7 14z" fill="#28a050" />
            <path d="M7 7h0L13.100 3.500A7 7 0 0 1 7 14z" fill="#f8cc30" />
            <circle cx="7" cy="7" r="3.200" fill="#fff" /><circle cx="7" cy="7" r="2.500" fill="#4080f0" />
          </svg>
        </TaskCell>
        <TaskCell $open><Spider /></TaskCell>
        <TaskCell $open>
          <svg width="17" height="15" viewBox="0 0 17 15"><path d="M.7 .7h15.600v13.600H.7z" fill="#3c3440" stroke="#b870a8" strokeWidth="1.200" /><path d="M0 0h17v4H0z" fill="#c03428" /><path d="M2 2h13" stroke="#501410" strokeWidth="2" strokeDasharray="2 1" /><path d="M6 5l6 3.500L6 12z" fill="#fff" /></svg>
        </TaskCell>
        <TaskCell $open>
          <svg width="16" height="12" viewBox="0 0 16 12"><path d="M.5 .5h15v11H.5z" fill="#505050" stroke="#8c8c8c" /><path d="M1 10h14" stroke="#999" strokeWidth="1.500" /><path d="M2 3.500h3M6 3.500h2M2 5.500h4" stroke="#aaa" strokeWidth=".6" /></svg>
        </TaskCell>
        <TaskCell $open $active><Logo size={18} /></TaskCell>
        <Spacer />
        <TrayIcon $w={23}><svg width="12" height="8"><path d="M.5 7L6 1.500 11.500 7" stroke="#fff" fill="none" strokeWidth="1.200" /></svg></TrayIcon>
        <TrayIcon $w={27}><svg width="16" height="13" viewBox="0 0 16 13"><path d="M4.500 4V3h10v8h-9V9" fill="none" stroke="#fff" /><path d="M6 5h7v4.500H6zM15 5.500h1v3h-1z" fill="#fff" /><path d="M1.500 0v3M4.500 0v3M.5 3h5v2L4 7H2L.5 5zM3 7v4h2" fill="none" stroke="#fff" /></svg></TrayIcon>
        <TrayIcon $w={21}><svg width="13" height="13" viewBox="0 0 13 13"><path d="M1 12A11 11 0 0 1 12 1M4 12.500A8 8 0 0 1 12 4.500M7 12.500A5 5 0 0 1 12 8" fill="none" stroke="#ddd" strokeWidth="1.100" /><circle cx="11" cy="11.500" r="1.500" fill="#fff" /></svg></TrayIcon>
        <TrayIcon $w={28}><svg width="17" height="13" viewBox="0 0 17 13"><path d="M.5 4.500h3L7 1.500v10L3.500 8.500h-3zM9 4.500q1.500 2 0 4M11.300 3q3 3.500 0 7M13.500 1q4.500 5.500 0 11" fill="none" stroke="#fff" /></svg></TrayIcon>
        <TrayText $w={34}>ESP</TrayText>
        <TrayText $w={45}>17:24</TrayText>
        <TrayIcon $w={36}><svg width="16" height="16" viewBox="0 0 16 16"><path d="M0 0h16v12.500h-5L8 16l-3-3.500H0z" fill="#fff" /><path d="M3 3.500h10M3 6.500h10M3 9.500h6" stroke="#1f1f1f" /></svg></TrayIcon>
        <PeekEdge />
      </TaskBar>

      <CursorDialog />
    </Window>
  </>
);

export default App;
